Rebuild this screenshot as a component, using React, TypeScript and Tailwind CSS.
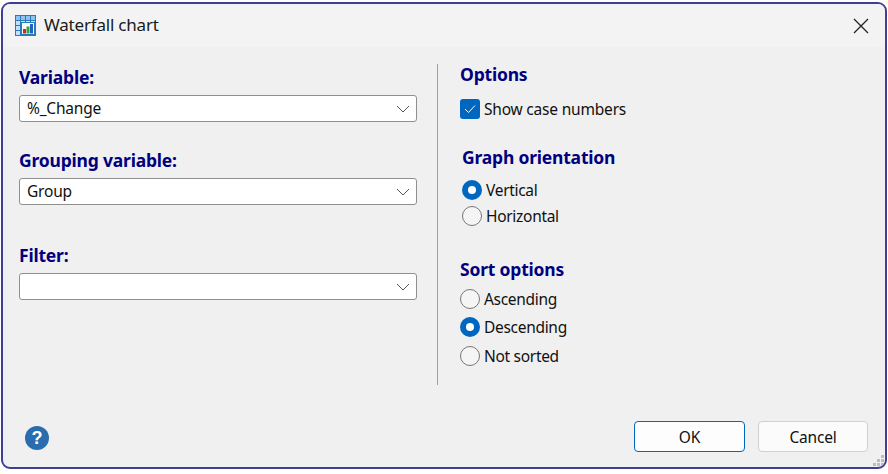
import React from "react";

function Heading({ children, className = "" }: { children: React.ReactNode; className?: string }) {
  return <div className={`text-[17.5px] leading-[20px] font-bold text-[#00007f] ${className}`}>{children}</div>;
}

function Select({ value }: { value: string }) {
  return (
    <div className="flex h-[27px] w-[398px] items-center justify-between rounded-[3px] border border-[#8f8f8f] bg-white pl-[7px] pr-[6px] text-[15.5px] leading-[20px] text-[#111]">
      <span className="pb-[2px]">{value}</span>
      <svg width="14" height="8" viewBox="0 0 14 8" fill="none" stroke="#555" strokeWidth="1">
        <path d="M1 1l6 6 6-6" />
      </svg>
    </div>
  );
}

function Radio({ label, checked, className = "" }: { label: string; checked?: boolean; className?: string }) {
  return (
    <div className={`flex items-center gap-[4px] text-[15.5px] leading-[20px] tracking-[-0.3px] text-[#111] ${className}`}>
      {checked ? (
        <span className="flex h-[20px] w-[20px] items-center justify-center rounded-full bg-[#0067c0]">
          <span className="h-[8px] w-[8px] rounded-full bg-white" />
        </span>
      ) : (
        <span className="h-[20px] w-[20px] rounded-full border border-[#777] bg-[#f5f5f5]" />
      )}
      <span>{label}</span>
    </div>
  );
}

export default function App() {
  return (
    <div className="h-[474px] w-[888px] bg-white font-['Noto_Sans','Open_Sans',sans-serif] tracking-[-0.2px]">
      <div className="ml-[1px] mt-[2px] flex h-[467px] w-[886px] flex-col overflow-hidden rounded-[9px] border-2 border-[#3f3f97] bg-[#f0f0f0]">
        <div className="flex h-[43px] items-center justify-between bg-[#f3f3f3] pl-[12px] pr-[16px]">
          <div className="flex items-center gap-[8px]">
            <svg width="21" height="21" viewBox="0 0 21 21">
              <rect x="0.5" y="0.5" width="20" height="20" fill="#c4e0f7" stroke="#2a78c0" />
              <rect x="1" y="1" width="19" height="4" fill="#8fc3ec" />
              <path d="M0 5.5h21M0 10.5h6M0 15.5h6M5.5 0v21M10.5 0v7M15.5 0v7" stroke="#2a78c0" strokeWidth="1" />
              <rect x="6.5" y="7.5" width="13" height="12" fill="#f7fafc" stroke="#2a78c0" />
              <rect x="8" y="14" width="3" height="4.5" fill="#d0281e" />
              <rect x="11.5" y="11.5" width="3" height="7" fill="#3aa335" />
              <rect x="15" y="9" width="3" height="9.5" fill="#1d62c4" />
            </svg>
            <span className="pb-[2px] text-[17px] leading-[22px] text-[#1a1a1a]">Waterfall chart</span>
          </div>
          <svg width="16" height="16" viewBox="0 0 16 16" stroke="#222" strokeWidth="1.3" fill="none">
            <path d="M1 1l14 14M15 1L1 15" />
          </svg>
        </div>

        <div className="flex flex-1 pl-[16px]">
          <div className="w-[398px] pt-[20px]">
            <Heading className="mb-[8px]">Variable:</Heading>
            <Select value="%_Change" />
            <Heading className="mb-[8px] mt-[28px]">Grouping variable:</Heading>
            <Select value="Group" />
            <Heading className="mb-[8px] mt-[40px]">Filter:</Heading>
            <Select value="" />
          </div>
          <div className="ml-[20px] mt-[17px] h-[321px] w-px bg-[#a0a0a0]" />
          <div className="ml-[22px] pt-[17px]">
            <Heading>Options</Heading>
            <div className="mt-[15px] flex items-center gap-[4px] text-[15.5px] leading-[20px] text-[#111]">
              <span className="flex h-[20px] w-[20px] items-center justify-center rounded-[3px] bg-[#0067c0]">
                <svg width="12" height="10" viewBox="0 0 12 10" fill="none" stroke="#fff" strokeWidth="1">
                  <path d="M1 5l3.5 3.5L11 1.5" />
                </svg>
              </span>
              <span>Show case numbers</span>
            </div>
            <Heading className="ml-[2px] mt-[28px]">Graph orientation</Heading>
            <Radio className="ml-[2px] mt-[13px]" label="Vertical" checked />
            <Radio className="ml-[2px] mt-[6px]" label="Horizontal" />
            <Heading className="mt-[33px]">Sort options</Heading>
            <Radio className="mt-[10px]" label="Ascending" />
            <Radio className="mt-[8px]" label="Descending" checked />
            <Radio className="mt-[9px]" label="Not sorted" />
          </div>
        </div>

        <div className="relative flex h-[50px] items-start justify-between pl-[22px] pr-[17px]">
          <svg className="mt-[9px]" width="24" height="24" viewBox="0 0 24 24">
            <circle cx="12" cy="12" r="12" fill="#2a6cb0" />
            <text x="12" y="18" textAnchor="middle" fontSize="18" fontWeight="800" fill="#fff" fontFamily="Liberation Sans">?</text>
          </svg>
          <div className="mt-[4px] flex gap-[13px] text-[15.5px] leading-[20px] text-[#111]">
            <button className="h-[31px] w-[111px] rounded-[4px] border border-[#0067c0] bg-[#fdfdfd] pt-[1px]">OK</button>
            <button className="h-[31px] w-[110px] rounded-[4px] border border-[#d0d0d0] bg-[#fbfbfb] pt-[1px]">Cancel</button>
          </div>
          <svg className="absolute bottom-[1px] right-[1px]" width="11" height="11" viewBox="0 0 11 11" fill="#bdbdbd">
            <rect x="8" y="0" width="3" height="3" />
            <rect x="4" y="4" width="3" height="3" />
            <rect x="8" y="4" width="3" height="3" />
            <rect x="0" y="8" width="3" height="3" />
            <rect x="4" y="8" width="3" height="3" />
            <rect x="8" y="8" width="3" height="3" />
          </svg>
        </div>
      </div>
    </div>
  );
}
